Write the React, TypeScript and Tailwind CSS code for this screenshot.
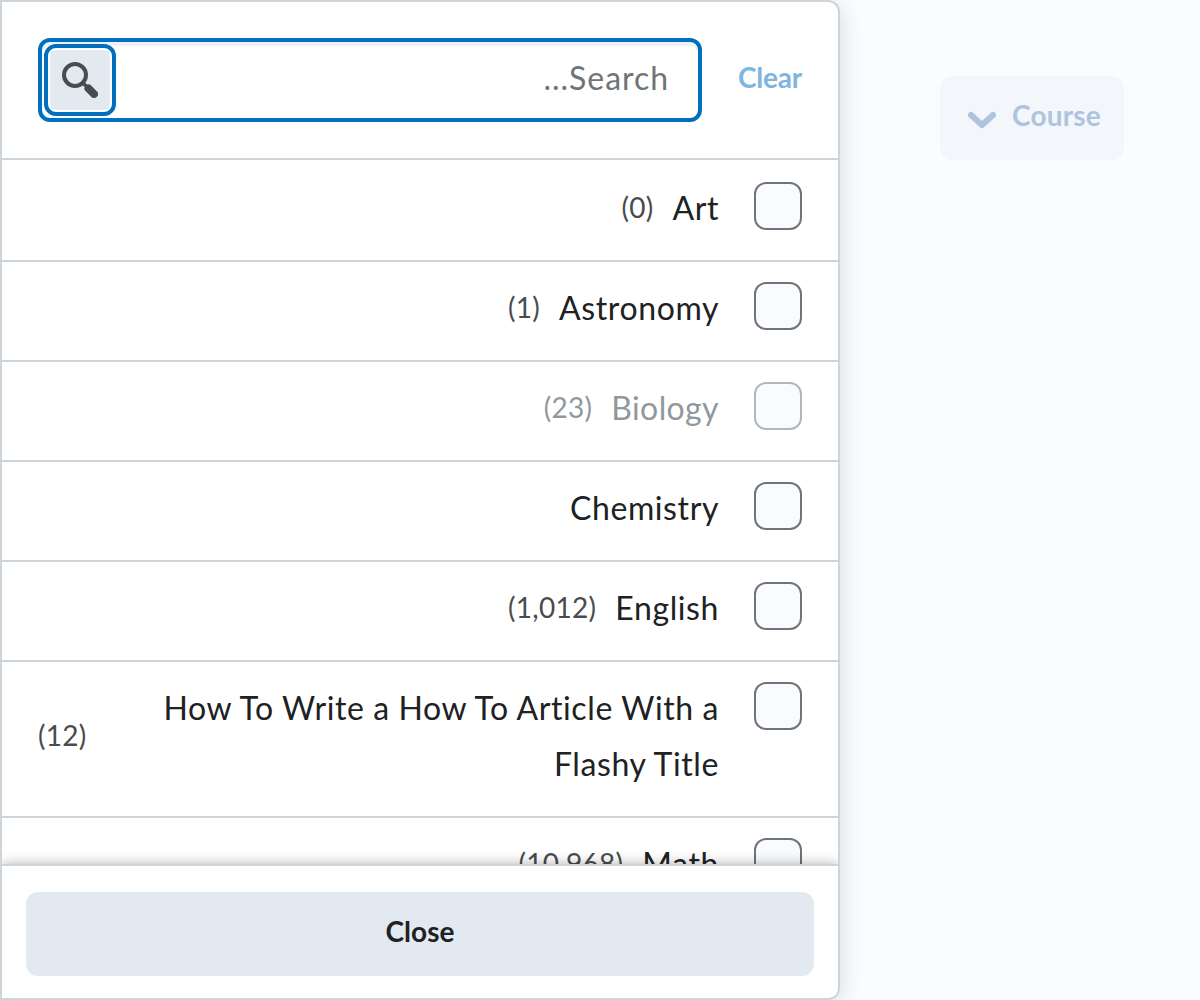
type Course = { name: string; count?: string; disabled?: boolean };

const courses: Course[] = [
  { name: "Art", count: "(0)" },
  { name: "Astronomy", count: "(1)" },
  { name: "Biology", count: "(23)", disabled: true },
  { name: "Chemistry" },
  { name: "English", count: "(1,012)" },
  { name: "How To Write a How To Article With a Flashy Title", count: "(12)" },
  { name: "Math", count: "(10,968)" },
];

function CourseRow({ name, count, disabled }: Course) {
  return (
    <li className="flex shrink-0 items-start border-b-2 border-[#cdd5dc] px-9 pt-5 pb-[22px] first:pt-[22px]">
      <span
        className={`size-12 shrink-0 rounded-[12px] border-2 bg-[#f9fbff] ${disabled ? "border-[#b1b7bc]" : "border-[#6e7477]"}`}
      />
      <div
        className={`-mt-0.5 mb-0.5 flex min-w-0 flex-1 items-center pr-[35px] ${disabled ? "tracking-[0.4px] text-[#90989d]" : "tracking-[0.6px] text-[#202122]"}`}
      >
        <span className="min-w-0 text-[32px] leading-[56px]">{name}</span>
        {count && (
          <span
            dir="ltr"
            className={`mr-[19px] mb-0.5 shrink-0 text-[28px] leading-9 tracking-[0.3px] ${disabled ? "" : "text-[#494c4e]"}`}
          >
            {count}
          </span>
        )}
      </div>
    </li>
  );
}

export default function App() {
  return (
    <div
      dir="rtl"
      className="flex h-[1000px] w-[1200px] items-start justify-end overflow-hidden bg-[#fbfcff] font-['Lato',sans-serif]"
    >
      <div className="flex flex-1 justify-start pt-[76px] pr-[76px]">
        <button className="flex h-[84px] w-[184px] items-center rounded-[12px] bg-[#f3f6fb] pr-[23px] pb-1.5 text-[28px] font-bold text-[#afc3de]">
          <span className="tracking-[0.2px]">Course</span>
          <svg className="mt-[9px] mr-4" width="28" height="18" viewBox="0 0 28 18" fill="none">
            <path d="M3 4L14 14L25 4" stroke="#afc3de" strokeWidth="6" strokeLinecap="round" strokeLinejoin="round" />
          </svg>
        </button>
      </div>

      <section className="flex h-[1000px] w-[840px] shrink-0 flex-col overflow-hidden rounded-r-[12px] border-2 border-[#cdd5dc] bg-white shadow-[0_4px_24px_rgba(0,0,0,0.15)]">
        <header className="flex h-[158px] shrink-0 items-start border-b-2 border-[#cdd5dc] px-9 pt-9">
          <button className="mt-[21px] w-16 text-[28px] leading-9 font-bold tracking-[-0.2px] text-[#7fb6df]">Clear</button>
          <div className="mr-9 flex h-[84px] min-w-0 flex-1 items-start rounded-[12px] border-4 border-[#006fbf] bg-white shadow-[inset_0_4px_0_#eff1f3]">
            <input
              placeholder="Search..."
              className="h-[71px] min-w-0 flex-1 bg-transparent pr-[29px] text-[32px] tracking-[0.95px] outline-none placeholder:text-[#6e7477] placeholder:opacity-100"
            />
            <button className="mt-0.5 ml-0.5 flex size-[72px] items-center justify-center rounded-[12px] border-4 border-[#006fbf] bg-[#e3e9f1] shadow-[inset_0_0_0_2px_#fff]">
              <svg width="36" height="36" viewBox="0 0 36 36" fill="none" stroke="#494c4e">
                <circle cx="13" cy="13" r="11" strokeWidth="4" />
                <path d="M20.5 20.5L25 25" strokeWidth="3.5" />
                <path d="M26.5 26.5L32 32" strokeWidth="8" strokeLinecap="round" />
              </svg>
            </button>
          </div>
        </header>

        <ul className="flex min-h-0 flex-1 flex-col overflow-hidden">
          {courses.map((course) => (
            <CourseRow key={course.name} {...course} />
          ))}
        </ul>

        <footer className="relative h-[134px] shrink-0 border-t-2 border-[#cdd5dc] bg-white px-6 pt-[26px] shadow-[0_0_12px_rgba(0,0,0,0.3)]">
          <button className="h-[84px] w-full rounded-[12px] bg-[#e3e9f1] pb-1.5 text-[28px] font-bold text-[#202122]">
            Close
          </button>
        </footer>
      </section>
    </div>
  );
}
